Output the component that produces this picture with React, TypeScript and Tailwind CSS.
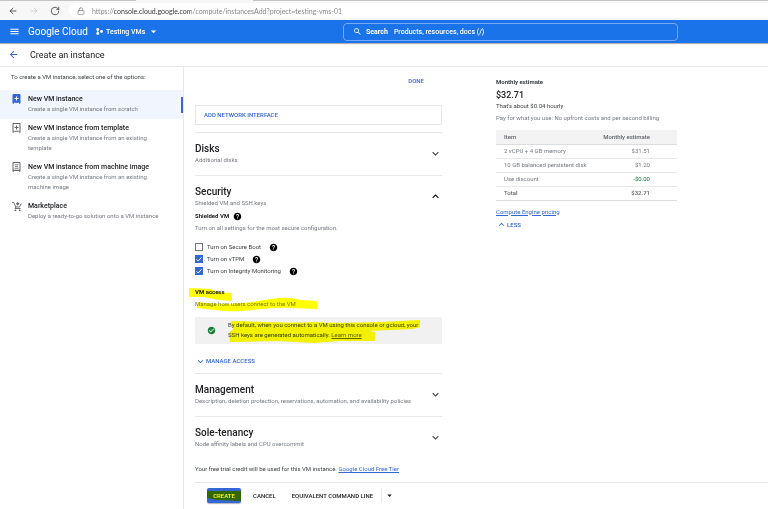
import type { ReactNode } from 'react';
import { ArrowLeft, ArrowRight, Lock, RotateCw } from 'lucide-react';
import {
  MdArrowBack,
  MdArrowDropDown,
  MdCheckCircle,
  MdExpandLess,
  MdExpandMore,
  MdHelp,
  MdMenu,
  MdSearch,
} from 'react-icons/md';

function BookmarkPlusIcon({ filled = false }: { filled?: boolean }) {
  return (
    <svg viewBox="0 0 18 20" className="w-[9px] h-[10px]" fill="none">
      <path
        d="M2 1h14v18l-3-2.500h-8L2 19z"
        fill={filled ? 'currentColor' : 'none'}
        stroke="currentColor"
        strokeWidth="2"
      />
      <path d="M9 5v8M5 9h8" stroke={filled ? '#fff' : 'currentColor'} strokeWidth="2" />
    </svg>
  );
}

function MachineImageIcon() {
  return (
    <svg viewBox="0 0 18 20" className="w-[9px] h-[10px]" fill="none" stroke="currentColor" strokeWidth="2">
      <path d="M2 1h14v18l-3-2H5l-3 2z" />
      <path d="M2 16.500h14" />
      <path d="M5 5.500h8M6 9h6M5 12.500h8" strokeWidth="1.600" />
    </svg>
  );
}

function MarketplaceIcon() {
  return (
    <svg viewBox="0 0 22 22" className="w-[10px] h-[11px]" fill="none" stroke="currentColor" strokeWidth="2">
      <path d="M0 2h3.500l5 10h8l4-7.500" />
      <path d="M8.500 12l-2 3.500h12.500" />
      <path d="M12.500 1l4 4-4 4-4-4z" fill="currentColor" stroke="none" />
      <circle cx="7.500" cy="19.500" r="2" fill="currentColor" stroke="none" />
      <circle cx="17" cy="19.500" r="2" fill="currentColor" stroke="none" />
    </svg>
  );
}

function ProjectIcon() {
  return (
    <svg viewBox="0 0 14 14" className="w-[7px] h-[7px]" fill="currentColor">
      <circle cx="3.500" cy="3" r="2.800" />
      <circle cx="3.500" cy="11" r="2.800" />
      <circle cx="11" cy="7" r="2.800" />
      <path d="M2.500 3h2v8h-2z" />
    </svg>
  );
}

const options = [
  { title: 'New VM instance', text: 'Create a single VM instance from scratch', icon: <BookmarkPlusIcon filled />, active: true },
  { title: 'New VM instance from template', text: 'Create a single VM instance from an existing template', icon: <BookmarkPlusIcon /> },
  { title: 'New VM instance from machine image', text: 'Create a single VM instance from an existing machine image', icon: <MachineImageIcon /> },
  { title: 'Marketplace', text: 'Deploy a ready-to-go solution onto a VM instance', icon: <MarketplaceIcon /> },
];

const shieldedOptions = [
  { id: 'secure-boot', label: 'Turn on Secure Boot', checked: false },
  { id: 'vtpm', label: 'Turn on vTPM', checked: true },
  { id: 'integrity', label: 'Turn on Integrity Monitoring', checked: true },
];

const costs = [
  { item: '2 vCPU + 4 GB memory', price: '$31.51' },
  { item: '10 GB balanced persistent disk', price: '$1.20' },
  { item: 'Use discount', price: '-$0.00', saving: true },
];

function BrowserBar() {
  return (
    <div className="bg-[#f7f7f7]">
      <div className="flex h-px">
        <div className="w-[136px] bg-[#c4c4c4]" />
        <div className="w-[117px] bg-[#f7f7f7]" />
        <div className="flex-1 bg-[#c4c4c4]" />
      </div>
      <div className="flex h-[19px] items-center pl-2">
        <button aria-label="Back" className="text-[#444]"><ArrowLeft size={10} /></button>
        <button aria-label="Forward" className="ml-[11px] text-[#ccc]"><ArrowRight size={10} /></button>
        <button aria-label="Reload" className="ml-[11px] text-[#444]"><RotateCw size={10} /></button>
        <div className="ml-[9px] flex h-[15px] flex-1 items-center rounded-l-full bg-white pl-2">
          <Lock size={8} className="text-[#777]" />
          <input
            aria-label="Address"
            defaultValue="https://console.cloud.google.com/compute/instancesAdd?project=testing-vms-01"
            className="ml-[7px] flex-1 bg-[linear-gradient(90deg,#808080_22px,#303030_22px,#303030_99px,#808080_99px)] bg-clip-text font-['Lato',sans-serif] text-[7px] leading-[10px] text-transparent outline-none"
          />
        </div>
      </div>
    </div>
  );
}

function TopBar() {
  return (
    <header className="relative flex h-[23px] items-center bg-[#1a73e8] pl-[9px] text-white shadow-[0_1px_1px_rgba(0,0,0,0.3)]">
      <button aria-label="Menu"><MdMenu size={11} /></button>
      <a href="#" className="ml-2 w-[56px] whitespace-nowrap text-[10px] leading-3">
        Google Cloud
      </a>
      <button className="ml-3 flex items-center gap-[3px] whitespace-nowrap text-[7px] leading-[10px] font-medium">
        <ProjectIcon />
        Testing VMs
        <MdArrowDropDown size={13} className="-ml-px" />
      </button>
      <div className="ml-auto mr-[90px] flex h-[18px] w-[335px] items-center rounded border border-[#76a9f1] pl-[9px] text-[7px] leading-[10px] font-medium">
        <MdSearch size={9} />
        <label htmlFor="search" className="ml-[4px] font-bold">Search</label>
        <input
          id="search"
          placeholder="Products, resources, docs (/)"
          className="ml-[6px] flex-1 font-medium outline-none placeholder:text-white"
        />
      </div>
    </header>
  );
}

function Sidebar() {
  return (
    <nav className="w-[184px] shrink-0 border-r border-[#e8e8e8] pt-[5px]">
      <p className="pb-2 pl-[11px] text-[6px] leading-[10px] text-[#3c4043]">
        To create a VM instance, select one of the options:
      </p>
      {options.map(({ title, text, icon, active }) => (
        <a
          key={title}
          href="#"
          className={`flex items-start pt-1 pb-[5px] pl-3 ${active ? 'bg-[#f0f5fe]' : ''}`}
        >
          <span className={`flex w-4 shrink-0 ${active ? 'text-[#3367d6]' : 'text-[#5f6368]'}`}>{icon}</span>
          <span className="flex-1 pr-6 text-[6px] leading-[10px] text-[#757a80]">
            <span className="block whitespace-nowrap text-[7px] font-medium text-[#202124]">{title}</span>
            <span className={title === 'Marketplace' ? 'whitespace-nowrap' : ''}>{text}</span>
          </span>
          {active && <span className="mt-[3px] h-4 w-[2px] bg-[#3367d6]" />}
        </a>
      ))}
    </nav>
  );
}

interface SectionProps {
  title: string;
  text: string;
  open?: boolean;
  children?: ReactNode;
}

function Section({ title, text, open, children }: SectionProps) {
  const Chevron = open ? MdExpandLess : MdExpandMore;
  return (
    <section className="border-t border-[#e8e8e8]">
      <button className={`flex w-full items-start pt-[10px] text-left ${open ? '' : 'pb-[10px]'}`}>
        <span className="flex-1">
          <span className="block text-[10px] leading-3 font-medium text-[#202124]">{title}</span>
          <span className="block text-[6px] leading-[10px] text-[#757a80]">{text}</span>
        </span>
        <Chevron size={13} className={`mt-1 ${open ? 'text-black' : 'text-[#3c4043]'}`} />
      </button>
      {children}
    </section>
  );
}

function ShieldedCheckbox({ id, label, checked }: { id: string; label: string; checked: boolean }) {
  return (
    <div className="flex h-3 items-center">
      <span className="relative flex">
        <input
          id={id}
          type="checkbox"
          defaultChecked={checked}
          className="peer size-2 appearance-none border border-[#70757a] bg-white checked:border-[#3367d6] checked:bg-[#3367d6]"
        />
        <svg viewBox="0 0 16 16" className="pointer-events-none absolute inset-0 hidden size-2 peer-checked:block" fill="none">
          <path d="M3 8.500l3.500 3.500L13 4.500" stroke="#fff" strokeWidth="2" />
        </svg>
      </span>
      <label htmlFor={id} className="ml-1 text-[#3c4043]">{label}</label>
      <button aria-label={`About ${label}`} className="ml-2 text-black"><MdHelp size={9} /></button>
    </div>
  );
}

// Marker strokes laid over the text, blended so the letters stay readable
function AccessMarker() {
  return (
    <svg viewBox="0 0 130 30" className="pointer-events-none absolute -top-1 -left-[6px] h-[30px] w-[130px] mix-blend-multiply">
      <path d="M0 5L22 6 28 9 43 10 43 18 30 17 15 14 0 14z" fill="#ff0" />
      <path d="M8 19C30 22 50 21 70 18 85 15 98 13 112 17L128 18V26L104 25C75 23 58 30 35 28L8 25z" fill="#ff0" />
    </svg>
  );
}

function NoticeMarker() {
  return (
    <svg viewBox="0 0 196 24" className="pointer-events-none absolute top-0 left-0 h-6 w-[196px] mix-blend-multiply">
      <path d="M3 1C30 1 55 4 85 2 120 4 155 2 192 0L192 7 185 9 140 11 147 12V21L112 21 86 23 50 21 2 22 1 13 5 9z" fill="#ff0" />
    </svg>
  );
}

function Security() {
  return (
    <Section title="Security" text="Shielded VM and SSH keys" open>
      <div className="pb-[7px]">
        <h3 className="mt-[3px] flex items-center gap-1 font-bold text-[#202124]">
          Shielded VM <MdHelp size={9} className="text-black" />
        </h3>
        <p className="mt-[2px] text-[#757a80]">Turn on all settings for the most secure configuration.</p>
        <div className="mt-2">
          {shieldedOptions.map((option) => (
            <ShieldedCheckbox key={option.id} {...option} />
          ))}
        </div>
        <div className="relative mt-[10px]">
          <h3 className="font-bold text-[#202124]">VM access</h3>
          <p className="mt-[2px] text-[#757a80]">Manage how users connect to the VM</p>
          <AccessMarker />
        </div>
        <div className="mt-2 flex items-center rounded-[1px] bg-[#f1f1f1] pt-[3px] pb-1 pl-3">
          <MdCheckCircle size={9} className="shrink-0 text-[#188038]" />
          <p className="relative ml-3 flex-1 whitespace-nowrap text-[#3c4043]">
            <span className="block">By default, when you connect to a VM using this console or gcloud, your</span>
            <span>SSH keys are generated automatically. </span>
            <a href="#" className="text-[#5f6368] underline">Learn more</a>
            <NoticeMarker />
          </p>
        </div>
        <button className="mt-3 flex h-[10px] items-center font-medium text-[#3367d6]">
          <MdExpandMore size={11} /> MANAGE ACCESS
        </button>
      </div>
    </Section>
  );
}

function Estimate() {
  return (
    <aside className="w-[181px] shrink-0 pt-[10px] text-[#757a80]">
      <h2 className="font-bold text-[#3c4043]">Monthly estimate</h2>
      <p className="mt-[2px] text-[9px] leading-3 font-medium text-[#202124]">$32.71</p>
      <p className="text-[#3c4043]">That's about $0.04 hourly</p>
      <p className="mt-[2px]">Pay for what you use: No upfront costs and per second billing</p>
      <table className="mt-[7px] w-full">
        <thead>
          <tr className="h-[14px] border-b border-[#dadce0] bg-[#f3f3f3] text-[#5f6368]">
            <th className="pl-2 text-left font-medium">Item</th>
            <th className="pr-[27px] text-right font-medium">Monthly estimate</th>
          </tr>
        </thead>
        <tbody>
          {costs.map(({ item, price, saving }) => (
            <tr key={item} className="h-[14px] border-b border-[#e8e8e8]">
              <td className="pl-2">{item}</td>
              <td className={`pr-[27px] text-right ${saving ? 'text-[#188038]' : ''}`}>{price}</td>
            </tr>
          ))}
          <tr className="h-[14px] border-b border-[#dadce0] font-medium text-[#5f6368]">
            <td className="pl-2">Total</td>
            <td className="pr-[27px] text-right">$32.71</td>
          </tr>
        </tbody>
      </table>
      <a href="#" className="mt-[6px] block w-fit text-[#3367d6] underline">Compute Engine pricing</a>
      <button className="mt-[3px] flex h-[10px] items-center font-medium text-[#3367d6]">
        <MdExpandLess size={11} /> LESS
      </button>
    </aside>
  );
}

function Footer() {
  return (
    <footer className="flex items-center border-t border-[#e8e8e8] pt-[5px] pb-[6px] pl-3 font-medium text-[#202124]">
      <button className="relative h-[15px] w-[34px] rounded-[2px] bg-[#3367d6] text-white shadow-[0_1px_1px_rgba(0,0,0,0.3)]">
        CREATE
        <svg viewBox="0 0 34 15" className="pointer-events-none absolute inset-0 h-[15px] w-[34px] mix-blend-multiply">
          <path d="M0 3L34 3V13L10 12 0 10z" fill="#ff0" />
        </svg>
      </button>
      <button className="ml-3">CANCEL</button>
      <button className="ml-4">EQUIVALENT COMMAND LINE</button>
      <button aria-label="More command options" className="ml-2 flex h-[15px] items-center border-l border-[#e8e8e8] pl-[2px]">
        <MdArrowDropDown size={11} />
      </button>
    </footer>
  );
}

export default function App() {
  return (
    <div className="flex min-h-screen flex-col bg-white font-['Roboto',sans-serif] text-[6px] leading-[10px]">
      <BrowserBar />
      <TopBar />
      <div className="flex h-6 items-center border-b border-[#e8e8e8] pl-2">
        <button aria-label="Go back" className="text-[#3367d6]"><MdArrowBack size={11} /></button>
        <h1 className="ml-[11px] text-[9px] leading-3 text-[#202124]">Create an instance</h1>
      </div>
      <div className="flex flex-1">
        <Sidebar />
        <div className="flex-1 pl-[11px]">
          <div className="flex gap-[54px]">
            <main className="w-[247px] shrink-0">
              <div className="flex justify-end pt-[9px] pr-[18px]">
                <button className="font-medium text-[#3367d6]">DONE</button>
              </div>
              <button className="mt-[19px] mb-[7px] block h-5 w-full border border-[#e8e8e8] pl-2 text-left font-medium text-[#3367d6]">
                ADD NETWORK INTERFACE
              </button>
              <Section title="Disks" text="Additional disks" />
              <Security />
              <Section title="Management" text="Description, deletion protection, reservations, automation, and availability policies" />
              <Section title="Sole-tenancy" text="Node affinity labels and CPU overcommit" />
              <p className="mt-[5px] mb-2 text-[#3c4043]">
                Your free trial credit will be used for this VM instance.{' '}
                <a href="#" className="text-[#3367d6] underline">Google Cloud Free Tier</a>
              </p>
            </main>
            <Estimate />
          </div>
          <Footer />
        </div>
      </div>
    </div>
  );
}
